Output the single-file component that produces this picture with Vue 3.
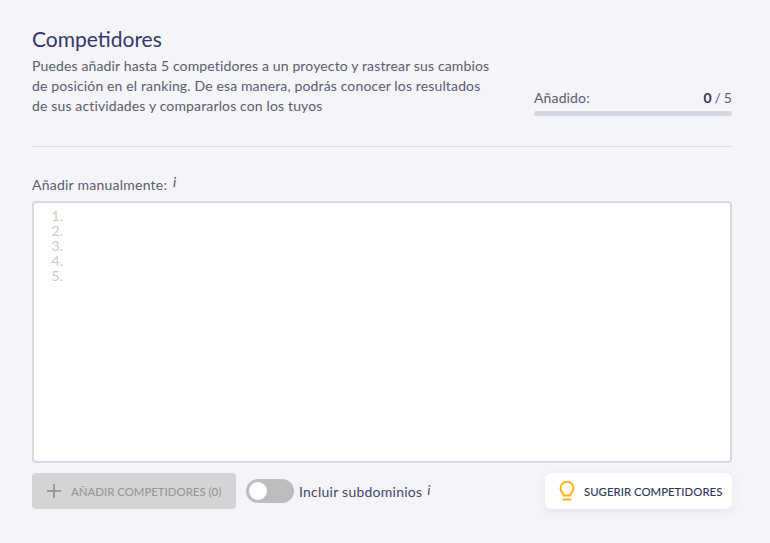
<script setup>
const lines = [1, 2, 3, 4, 5]
</script>

<template>
  <div class="page">
    <header class="head">
      <div class="intro">
        <h1 class="title">Competidores</h1>
        <p class="desc">Puedes añadir hasta 5 competidores a un proyecto y rastrear sus cambios de posición en el ranking. De esa manera, podrás conocer los resultados de sus actividades y compararlos con los tuyos</p>
      </div>
      <div class="counter">
        <div class="counter-row">
          <span>Añadido:</span>
          <span class="count"><b>0</b> / 5</span>
        </div>
        <div class="bar"></div>
      </div>
    </header>
    <div class="rule"></div>
    <div class="label">Añadir manualmente: <i class="info">i</i></div>
    <div class="area">
      <div v-for="n in lines" :key="n" class="num">{{ n }}.</div>
    </div>
    <div class="actions">
      <button class="add" disabled>
        <svg class="plus" width="16" height="16" viewBox="0 0 16 16"><path d="M8 1v14M1 8h14" stroke="#999" stroke-width="2" fill="none"/></svg>
        <span>AÑADIR COMPETIDORES (0)</span>
      </button>
      <div class="toggle"><span class="knob"></span></div>
      <span class="sub">Incluir subdominios</span>
      <i class="info sub-info">i</i>
      <button class="suggest">
        <svg width="20" height="22" viewBox="0 0 20 22" fill="none" stroke="#ffb30f" stroke-width="2"><path d="M6.800 15.500c0-2.200-3.300-3.600-3.300-7.300a6.500 6.500 0 0 1 13 0c0 3.700-3.300 5.100-3.300 7.300z" stroke-linejoin="round"/><path d="M6.500 19.500h7" stroke-linecap="round"/></svg>
        <span>SUGERIR COMPETIDORES</span>
      </button>
    </div>
  </div>
</template>

<style scoped>
.page {
  box-sizing: border-box;
  width: 770px;
  height: 543px;
  padding: 27px 38px 0 32px;
  background: #f4f4f9;
  font-family: Lato, "Liberation Sans", sans-serif;
  color: #5a5d70;
  overflow: hidden;
}
.head {
  display: flex;
  justify-content: space-between;
  align-items: flex-end;
}
.intro { width: 460px; }
.title {
  margin: 0;
  font-size: 21px;
  line-height: 24px;
  font-weight: 400;
  color: #34376a;
}
.desc {
  margin: 5px 0 0;
  font-size: 14px;
  letter-spacing: 0.14px;
  line-height: 20px;
}
.counter {
  width: 198px;
  font-size: 14px;
  letter-spacing: 0.14px;
}
.counter-row {
  display: flex;
  justify-content: space-between;
  line-height: 20px;
  margin-bottom: 3px;
}
.count { word-spacing: -1px; }
.count b { font-weight: 700; color: #33354a; }
.bar {
  height: 5px;
  border-radius: 2px;
  background: #d5d7e3;
}
.rule {
  height: 1px;
  margin-top: 30px;
  background: #dcdcea;
}
.label {
  margin-top: 28px;
  font-size: 14px;
  letter-spacing: 0.24px;
  line-height: 20px;
}
.info {
  font-family: Lato, sans-serif;
  font-size: 14px;
  font-style: italic;
  position: relative;
  top: -3px;
  left: 2px;
  color: #4f5268;
}
.area {
  box-sizing: border-box;
  height: 262px;
  margin-top: 6px;
  padding: 5px 0 0 15px;
  background: #fff;
  border: 2px solid #d5d7e3;
  border-radius: 4px;
}
.num {
  width: 14px;
  text-align: right;
  font-size: 14px;
  line-height: 15px;
  color: #c9c9c9;
}
.actions {
  display: flex;
  align-items: center;
  margin-top: 10px;
}
.add {
  display: flex;
  align-items: center;
  width: 204px;
  height: 36px;
  padding: 0 0 0 14px;
  border: 0;
  border-radius: 4px;
  background: #d4d4d4;
  color: #979797;
  font: 500 11.4px Lato, sans-serif;
}
.plus { margin-right: 9px; }
.toggle {
  box-sizing: border-box;
  width: 48px;
  height: 24px;
  margin-left: 10px;
  padding: 3px;
  border-radius: 12px;
  background: #bdbdbd;
}
.knob {
  display: block;
  width: 18px;
  height: 18px;
  border-radius: 50%;
  background: #fff;
}
.sub {
  margin-left: 5px;
  font-size: 14px;
  letter-spacing: 0.24px;
  color: #44476b;
}
.sub-info { margin-left: 3px; top: -2px; }
.suggest {
  display: flex;
  align-items: center;
  gap: 7px;
  width: 187px;
  height: 36px;
  margin-left: auto;
  padding: 0 0 0 12px;
  border: 0;
  border-radius: 6px;
  background: #fff;
  box-shadow: 0 3px 10px rgba(90, 90, 140, 0.1);
  color: #33365a;
  font: 500 11.4px Lato, sans-serif;
}
</style>
